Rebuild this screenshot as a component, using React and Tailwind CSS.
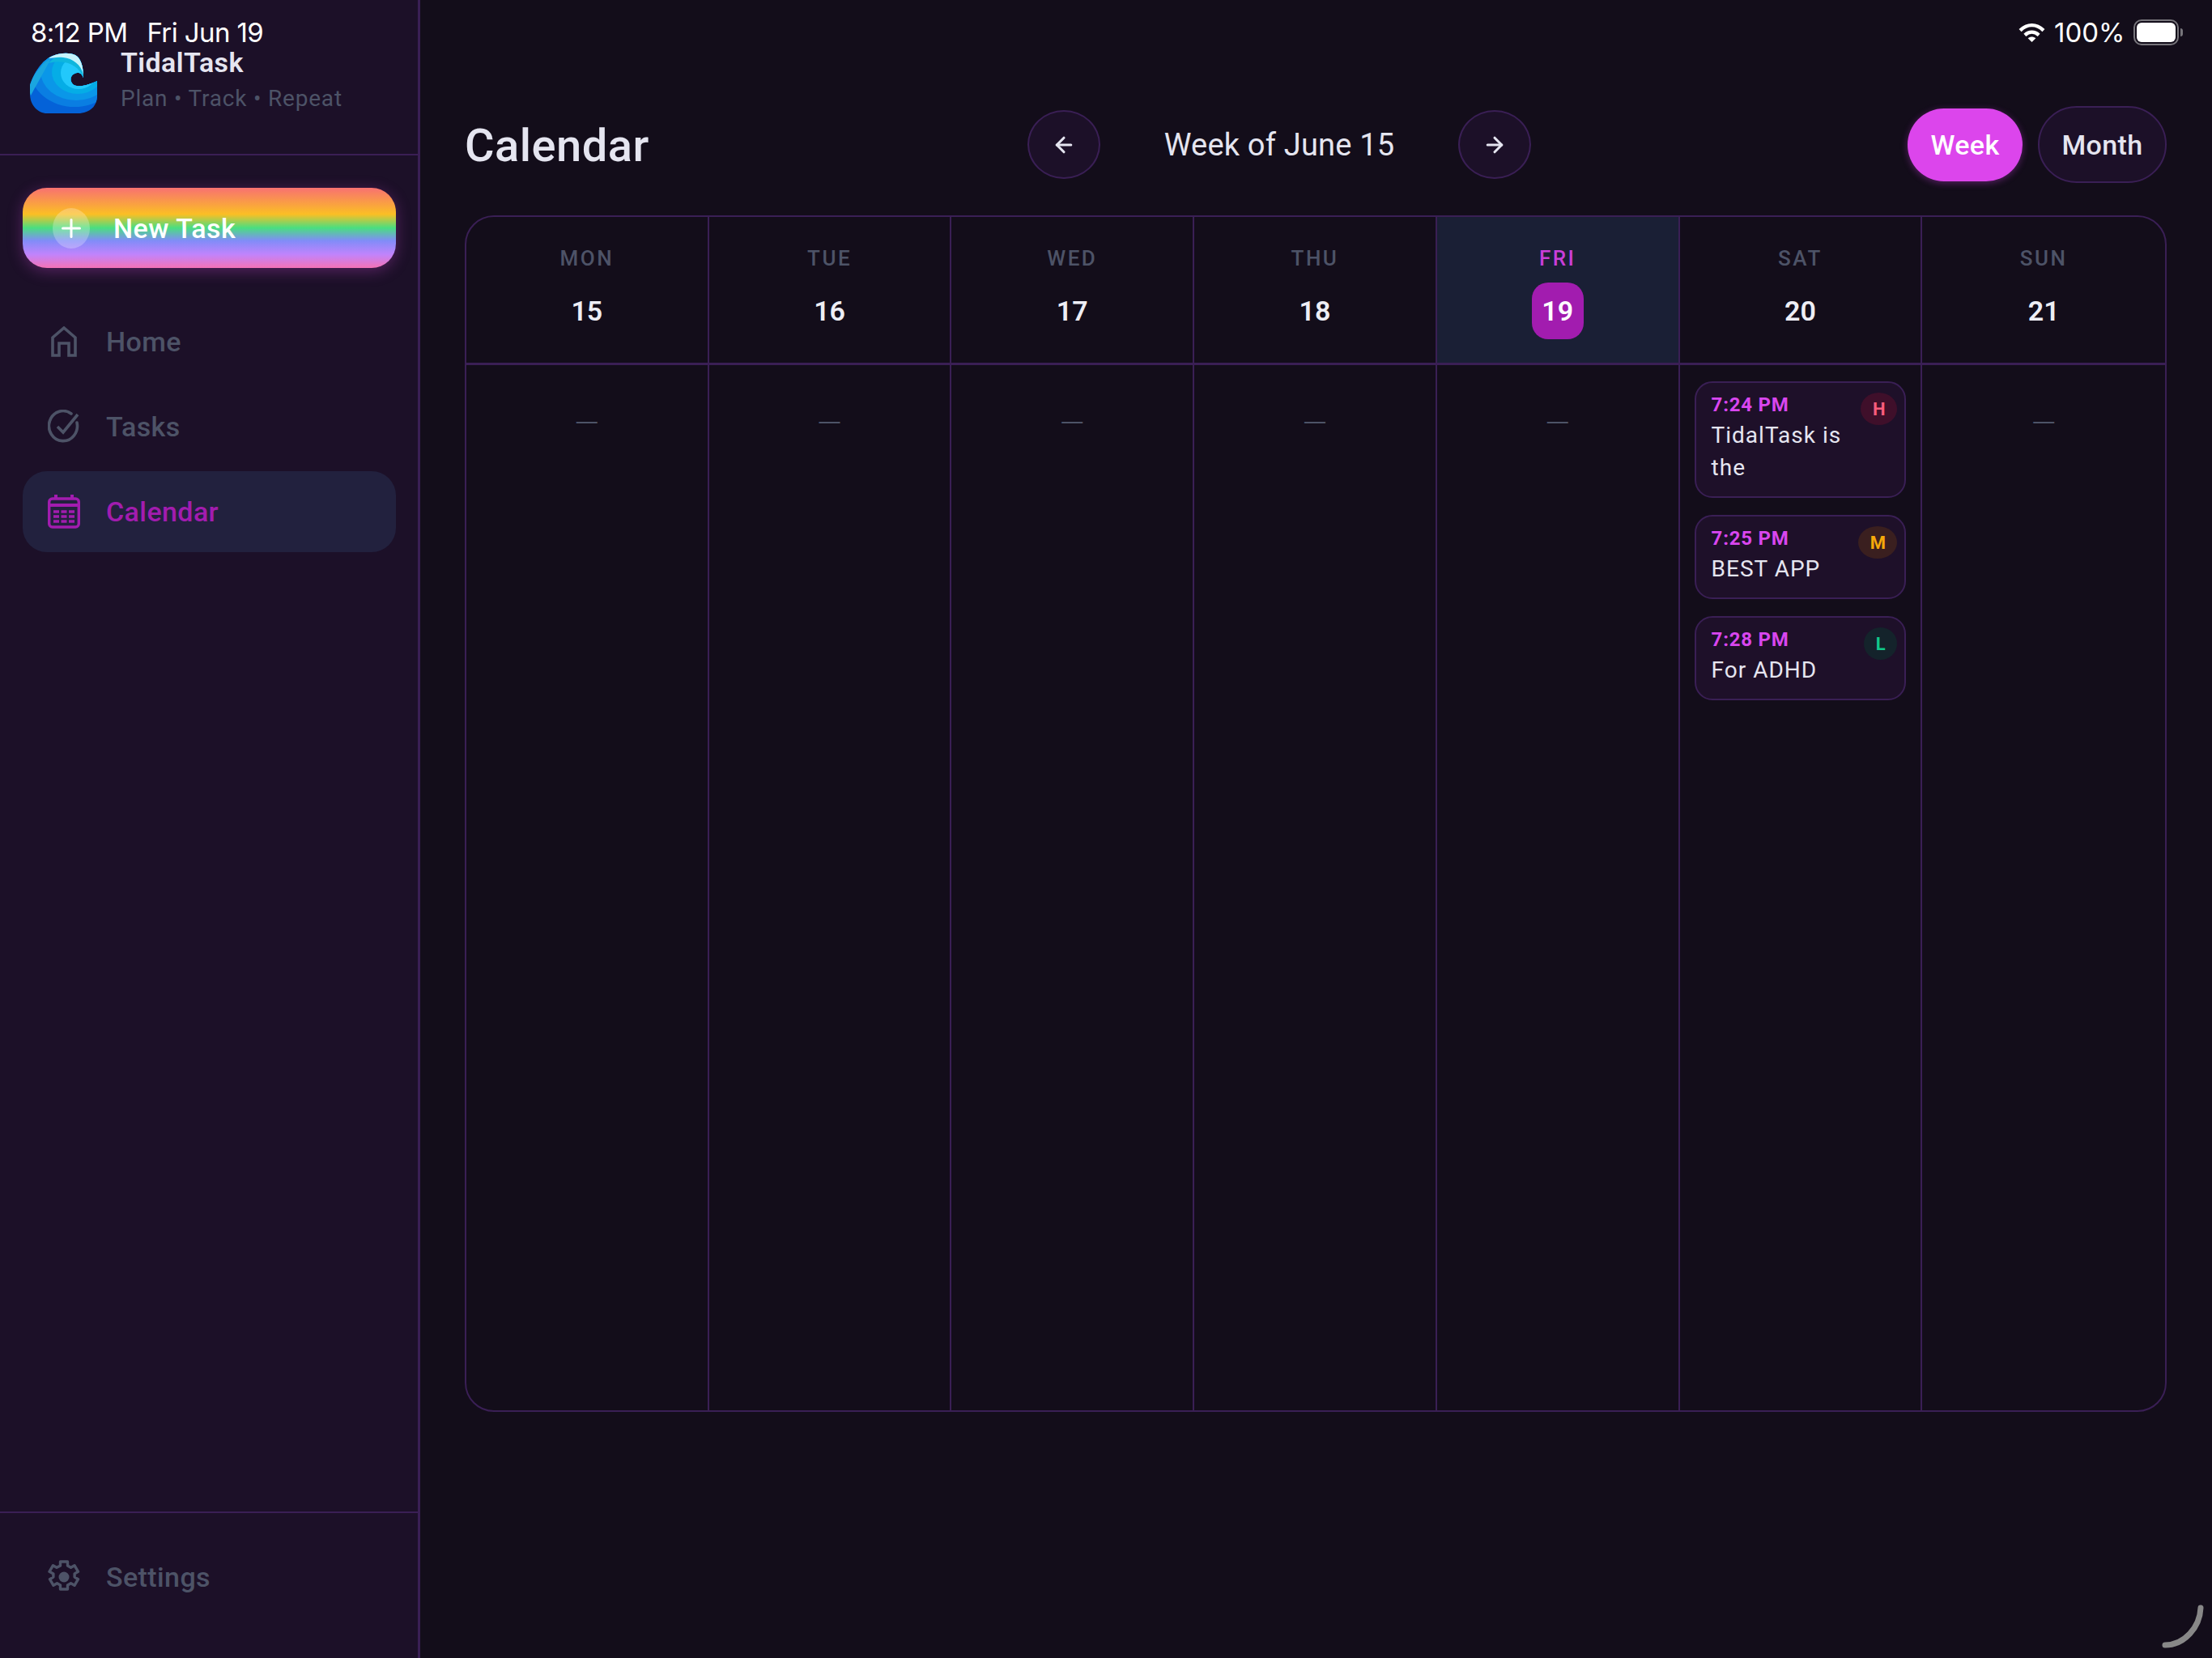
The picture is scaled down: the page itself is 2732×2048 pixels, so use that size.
import React from 'react';
import { ArrowLeft, ArrowRight, Plus } from 'lucide-react';

const DAYS = [
  { label: 'MON', num: 15 },
  { label: 'TUE', num: 16 },
  { label: 'WED', num: 17 },
  { label: 'THU', num: 18 },
  { label: 'FRI', num: 19, today: true },
  { label: 'SAT', num: 20 },
  { label: 'SUN', num: 21 },
];

const SAT_EVENTS = [
  { time: '7:24 PM', title: 'TidalTask is the', prio: 'H', badge: 'bg-[#3f0f2a] text-[#fb5c7c] w-[45px]' },
  { time: '7:25 PM', title: 'BEST APP', prio: 'M', badge: 'bg-[#3a1f1f] text-[#f5a90a] w-[48px]' },
  { time: '7:28 PM', title: 'For ADHD', prio: 'L', badge: 'bg-[#14232b] text-[#10c98a] w-[41px]' },
];

const WAVE_OUTLINE = 'M7 47C12 32 22 16 35 11C45 7 56 7 63 10C70 14 73 24 73 38C71 33 68 31 65 32C59 33 56 38 58 43C60 48 66 49 72 48C78 47 85 44 90 42L90 62C89 72 84 78 74 81C70 82 68 82 64 82L28 82C17 82 7 72 7 58Z';

const Wave = () => (
  <svg viewBox="0 0 96 88" className="w-[96px] h-[88px] shrink-0">
    <defs>
      <clipPath id="wave-clip">
        <path d={WAVE_OUTLINE} />
      </clipPath>
    </defs>
    <g clipPath="url(#wave-clip)">
      <rect width="96" height="88" fill="#0462d8" />
      <ellipse cx="62" cy="30" rx="54" ry="44" fill="#0a7ee2" />
      <ellipse cx="64" cy="30" rx="44" ry="36" fill="#0a97e8" />
      <ellipse cx="66" cy="31" rx="32" ry="27" fill="#05ade6" />
      <ellipse cx="67" cy="32" rx="22" ry="20" fill="#22c8fb" />
      <path d="M5 50C12 32 22 20 33 14C28 24 20 38 8 60z" fill="#1aa6df" />
      <path d="M30 20C40 8 56 6 64 10C70 14 73 24 73 38C68 24 52 14 30 20z" fill="#0fb6dd" />
      <path d="M30 14C40 6 56 6 64 10C70 14 73 24 73 34C70 22 60 14 48 13C40 12 34 14 30 14z" fill="#c6f3fb" />
    </g>
  </svg>
);

const HomeIcon = () => (
  <svg viewBox="0 0 32 38" className="w-[32px] h-[38px]" fill="none" stroke="currentColor" strokeWidth="3.6">
    <path d="M2 36V14L16 2l14 12v22h-8V21H10v15z" />
  </svg>
);

const TasksIcon = () => (
  <svg viewBox="0 0 40 42" className="w-[40px] h-[42px]" fill="none" stroke="currentColor" strokeWidth="3.6" strokeLinecap="round">
    <path d="M36 16a17.5 18.500 0 1 1-7-11" />
    <path d="M12 21l7 7L37 6" strokeLinecap="butt" />
  </svg>
);

const CalendarIcon = () => (
  <svg viewBox="0 0 40 42" className="w-[40px] h-[42px]" fill="none" stroke="currentColor">
    <rect x="1.7" y="5" width="36.6" height="35" rx="4" strokeWidth="3.4" />
    <path d="M2 13h36" strokeWidth="4" />
    <path d="M10 0v6M30 0v6" strokeWidth="4" />
    <path d="M7 21h7M16.500 21h7M26 21h7M7 27h7M16.500 27h7M26 27h7M7 33h7M16.500 33h7M26 33h7" strokeWidth="3.4" />
  </svg>
);

const GearIcon = () => (
  <svg viewBox="0 0 40 42" className="w-[40px] h-[42px]" fill="none" stroke="currentColor" strokeWidth="3.4" strokeLinejoin="round">
    <path d="M15.500 2h9v5l4 2.200 4.500-2.500 4.500 7.600-4.400 2.600v4.200l4.400 2.600-4.500 7.600-4.500-2.500-4 2.200v5h-9v-5l-4-2.200-4.500 2.500-4.500-7.600 4.400-2.600v-4.200L2 14.300l4.500-7.600 4.500 2.500 4.500-2.200z" />
    <circle cx="20" cy="21" r="6.500" fill="currentColor" stroke="none" />
  </svg>
);

const NavItem = ({ icon, label, active }) => (
  <div className={`flex items-center h-[100px] pl-[31px] gap-[32px] rounded-[30px] text-[34px] font-medium tracking-[0.4px] ${active ? 'bg-[#22213e] text-[#a21caf]' : 'text-[#4d5367]'}`}>
    <div className="w-[40px] flex justify-center">{icon}</div>
    {label}
  </div>
);

const EventCard = ({ ev }) => (
  <div className="flex justify-between pl-[19px] pr-[9px] py-[11px] rounded-[22px] border-2 border-[#3a1f55] bg-[#1e1029]">
    <div className="min-w-0 w-[170px]">
      <div className="text-[24px] leading-[30px] pt-[1px] font-bold tracking-[0.8px] text-[#d946ef]">{ev.time}</div>
      <div className="text-[28px] leading-[40px] mt-[3px] font-normal tracking-[1px] text-[#e5e5f0] pb-[4px]">{ev.title}</div>
    </div>
    <div className={`h-[40px] mt-[1px] rounded-[50%] flex items-center justify-center text-[22px] font-bold ${ev.badge}`}>{ev.prio}</div>
  </div>
);

const App = () => {
  return (
    <div className="relative w-[2732px] h-[2048px] flex overflow-hidden bg-[#130d1a] font-['Roboto',sans-serif]">
      {/* status bar sits over the app */}
      <div className="absolute top-[18px] left-[38px] text-[33px] leading-[44px] tracking-[-0.6px] text-white flex gap-[24px] font-['Inter',sans-serif]">
        <span>8:12 PM</span>
        <span>Fri Jun 19</span>
      </div>
      <div className="absolute top-[18px] left-[2493px] flex items-center gap-[11px] text-[33px] leading-[44px] text-white font-['Inter',sans-serif]">
        <svg viewBox="0 0 34 26" className="w-[33px] h-[25px]" fill="none" stroke="white" strokeWidth="4.500">
          <path d="M2 10c9-9 21-9 30 0" />
          <path d="M8 16c5.500-5 12.500-5 18 0" />
          <path d="M17 25l-5-5c3-2.500 7-2.500 10 0z" fill="white" stroke="none" />
        </svg>
        <span>100%</span>
        <div className="flex items-center gap-[2px]">
          <div className="w-[56px] h-[32px] rounded-[10px] border-2 border-[#77757b] p-[2px]">
            <div className="w-full h-full rounded-[6px] bg-white" />
          </div>
          <div className="w-[3px] h-[10px] rounded-r-sm bg-[#77757b]" />
        </div>
      </div>

      <aside className="w-[519px] h-full shrink-0 flex flex-col bg-[#1c1028] border-r-[3px] border-[#3a1f55]">
        <div className="h-[192px] shrink-0 border-b-2 border-[#3a1f55] flex gap-[23px] pl-[30px] pt-[58px]">
          <Wave />
          <div className="pt-[6px]">
            <div className="text-[34px] leading-[26px] font-semibold tracking-[0.4px] text-[#e5e5f0]">TidalTask</div>
            <div className="text-[28px] leading-[34px] mt-[15px] tracking-[0.8px] text-[#4d5367]">Plan • Track • Repeat</div>
          </div>
        </div>

        <div className="flex-1 flex flex-col pl-[28px] pr-[27px] pt-[40px]">
          <div className="h-[99px] rounded-[30px] flex items-center pl-[37px] gap-[29px] text-[34px] font-medium tracking-[0.5px] text-white bg-[linear-gradient(180deg,#f87171_0%,#fbbf24_33%,#4ade80_50%,#818cf8_66%,#c084fc_83%,#f472b6_100%)] shadow-[0_4px_18px_rgba(192,70,200,0.35)]">
            <div className="w-[46px] h-[50px] rounded-[50%] bg-white/25 flex items-center justify-center">
              <Plus size={36} strokeWidth={2} />
            </div>
            <span className="pt-[2px]">New Task</span>
          </div>
          <div className="flex flex-col gap-[5px] mt-[41px]">
            <NavItem icon={<HomeIcon />} label="Home" />
            <NavItem icon={<TasksIcon />} label="Tasks" />
            <NavItem icon={<CalendarIcon />} label="Calendar" active />
          </div>
        </div>

        <div className="h-[181px] shrink-0 border-t-2 border-[#3a1f55] pl-[28px] pr-[27px] pt-[29px]">
          <NavItem icon={<GearIcon />} label="Settings" />
        </div>
      </aside>

      <main className="flex-1 pl-[55px] pr-[56px] pt-[131px]">
        <div className="relative h-[95px] flex items-center justify-between">
          <h1 className="text-[56px] pt-[2px] font-medium tracking-[0.5px] text-[#e5e5f0]">Calendar</h1>
          <div className="absolute left-[695px] top-[5px] w-[622px] flex items-center justify-between">
            <button className="w-[90px] h-[85px] rounded-[50%] border-2 border-[#3a1f55] bg-[#1c1028] text-[#e5e5f0] flex items-center justify-center">
              <ArrowLeft size={30} strokeWidth={2.500} />
            </button>
            <span className="text-[38px] pt-[2px] font-normal tracking-[0.2px] text-[#e5e5f0]">Week of June 15</span>
            <button className="w-[90px] h-[85px] rounded-[50%] border-2 border-[#3a1f55] bg-[#1c1028] text-[#e5e5f0] flex items-center justify-center">
              <ArrowRight size={30} strokeWidth={2.500} />
            </button>
          </div>
          <div className="flex items-center gap-[19px] text-[34px] font-medium tracking-[0.4px]">
            <div className="w-[142px] h-[90px] pt-[2px] rounded-full bg-[#dc45ec] text-white flex items-center justify-center shadow-[0_2px_8px_rgba(217,70,239,0.35)]">Week</div>
            <div className="w-[159px] h-[95px] pt-[2px] rounded-full border-2 border-[#3a1f55] bg-[#1c1028] text-[#e5e5f0] flex items-center justify-center">Month</div>
          </div>
        </div>

        <div className="mt-[40px] h-[1478px] grid grid-cols-7 grid-rows-[183px_1fr] rounded-[36px] border-2 border-[#3a1f55] overflow-hidden">
          {DAYS.map((d, i) => (
            <div key={d.label} className={`flex flex-col items-center border-b-[3px] border-[#3a1f55] ${i < 6 ? 'border-r-2' : ''} ${d.today ? 'bg-[#1a1f35]' : ''}`}>
              <div className={`mt-[35px] text-[26px] leading-[32px] font-medium tracking-[2.500px] ${d.today ? 'text-[#c93ed9]' : 'text-[#4d5367]'}`}>{d.label}</div>
              {d.today ? (
                <div className="mt-[14px] w-[64px] h-[70px] rounded-[20px] bg-[#a21caf] text-white text-[34px] font-semibold flex items-center justify-center">{d.num}</div>
              ) : (
                <div className="mt-[14px] h-[70px] text-[#eeeef5] text-[34px] font-semibold flex items-center justify-center">{d.num}</div>
              )}
            </div>
          ))}
          {DAYS.map((d, i) => (
            <div key={d.label} className={`${i < 6 ? 'border-r-2' : ''} border-[#3a1f55]`}>
              {d.label === 'SAT' ? (
                <div className="flex flex-col gap-[21px] pt-[20px] px-[18px]">
                  {SAT_EVENTS.map((ev) => <EventCard key={ev.time} ev={ev} />)}
                </div>
              ) : (
                <div className="pt-[52px] text-center text-[26px] leading-[36px] text-[#4d5367] font-['Inter',sans-serif]">—</div>
              )}
            </div>
          ))}
        </div>
      </main>

      {/* iPad cursor corner */}
      <svg viewBox="0 0 52 54" className="absolute left-[2670px] top-[1982px] w-[52px] h-[54px]" fill="none" stroke="#888" strokeWidth="7" strokeLinecap="round">
        <path d="M48 4c-1 24-20 46-44 46" />
      </svg>
    </div>
  );
};

export default App;
